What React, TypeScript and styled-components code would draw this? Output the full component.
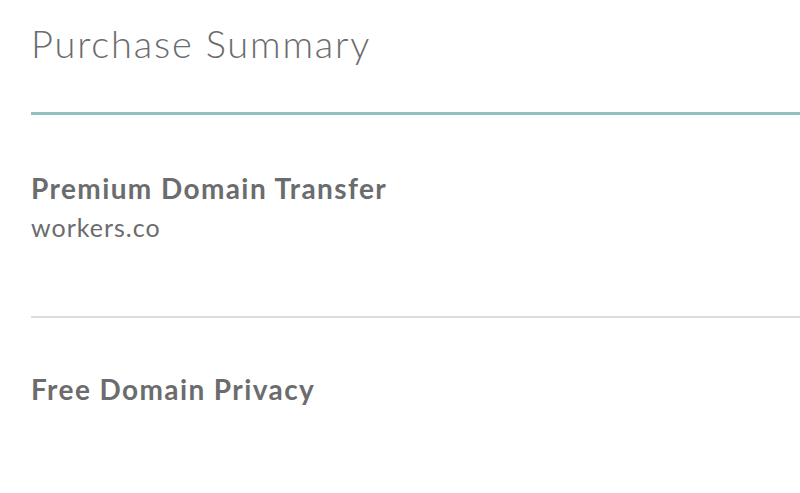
import styled, { createGlobalStyle } from 'styled-components';

const GlobalStyle = createGlobalStyle`
  html, body {
    margin: 0;
    padding: 0;
    background: #fff;
  }
  body {
    font-family: Lato, "Open Sans", sans-serif;
    color: #6b6c6e;
  }
`;

const Summary = styled.section`
  display: flex;
  flex-direction: column;
  margin-left: 31px;
`;

const Title = styled.h1`
  margin: 0;
  padding-top: 19px;
  padding-bottom: 45px;
  font-size: 38px;
  font-weight: 300;
  line-height: 48px;
  letter-spacing: 1.8px;
  border-bottom: 3px solid #91c0c0;
`;

const Item = styled.div<{ last?: boolean }>`
  display: flex;
  flex-direction: column;
  padding-top: ${({ last }) => (last ? '54px' : '56px')};
  padding-bottom: 75px;
  border-bottom: ${({ last }) => (last ? 'none' : '2px solid #dcdcdc')};
`;

const ItemName = styled.div`
  font-size: 28px;
  font-weight: 700;
  line-height: 34px;
  letter-spacing: 1.4px;
`;

const ItemDomain = styled.div`
  margin-top: 8px;
  font-size: 25px;
  font-weight: 400;
  line-height: 28px;
  letter-spacing: 1px;
`;

export default function App() {
  return (
    <>
      <GlobalStyle />
      <Summary>
        <Title>Purchase Summary</Title>
        <Item>
          <ItemName>Premium Domain Transfer</ItemName>
          <ItemDomain>workers.co</ItemDomain>
        </Item>
        <Item last>
          <ItemName>Free Domain Privacy</ItemName>
        </Item>
      </Summary>
    </>
  );
}
